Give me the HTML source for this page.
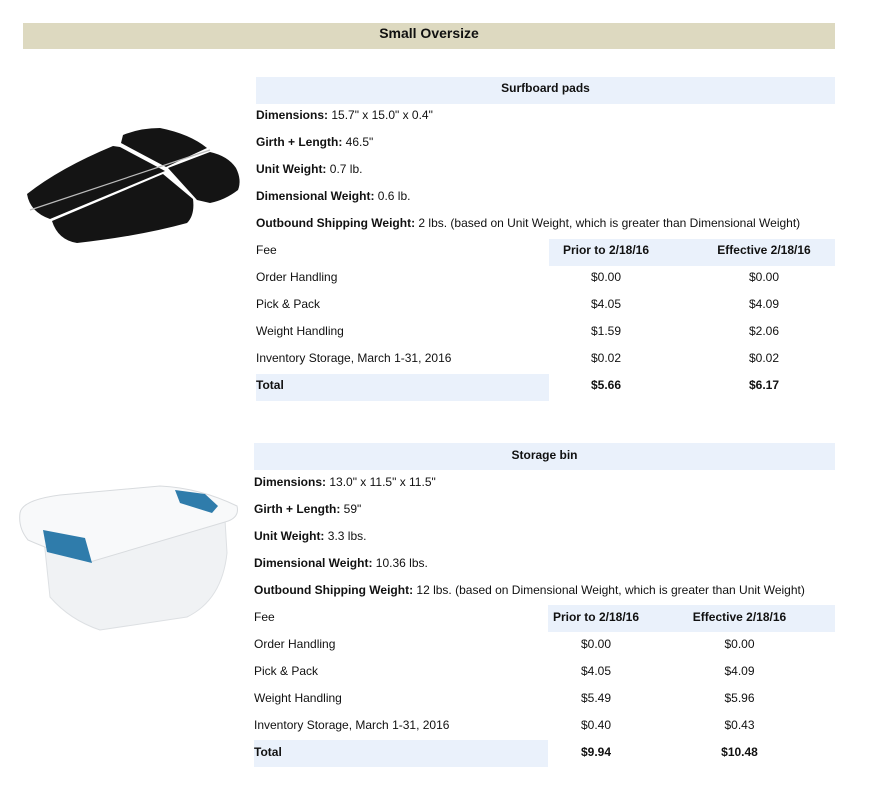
<!DOCTYPE html>
<html><head><style>
body{margin:0;background:#fff;font-family:"Liberation Sans",Arial,sans-serif;font-size:12px;color:#111;width:870px;height:787px;position:relative;overflow:hidden}
.hdr{position:absolute;left:23px;top:23px;width:812px;height:26px;background:#ddd9c0;text-align:center;font-weight:bold;font-size:14px;line-height:21px}
table{position:absolute;border-collapse:collapse}
td{height:22px;padding:0 0 5px 0;vertical-align:middle;line-height:20px}
.t2 td{height:23px;padding:0 0 4px 0}
.b{background:#eaf1fb}
.c{text-align:center}
</style></head><body>
<div class="hdr">Small Oversize</div>

<svg style="position:absolute;left:0;top:0" width="870" height="787">
<g fill="#141414">
<path d="M27 194 Q60 168 113 146 L120 147 L165 171 L50 219 Q30 212 27 194Z"/>
<path d="M121 143 L123 135 Q140 128 160 128 Q190 134 207 148 L166 167Z"/>
<path d="M52 221 L163 174 L193 199 Q195 215 187 223 Q140 236 77 243 Q58 240 52 221Z"/>
<path d="M168 168 L210 152 Q228 156 236 168 Q242 180 238 190 Q225 200 210 203 L197 200Z"/>
</g>
<path d="M30 210 L210 150" stroke="#bbb" stroke-width="1.2"/>

<path d="M44 540 L50 597 Q70 620 100 630 L187 617 Q222 600 227 553 L225 520 Z" fill="#f0f2f4" stroke="#dde0e3"/>
<path d="M20 513 Q22 500 60 495 L160 486 Q200 488 237 506 Q240 518 225 522 L90 562 Q55 552 28 540 Q18 528 20 513Z" fill="#f8f9fa" stroke="#d8dbde"/>
<path d="M43 530 L85 538 L92 563 L47 552 Z" fill="#2f7cab"/>
<path d="M175 490 L205 494 L218 506 L212 513 L180 503Z" fill="#2f7cab"/>
</svg>

<table style="left:256px;top:77px;width:579px">
<tr><td colspan="3" class="b c" style="font-weight:bold">Surfboard pads</td></tr>
<tr><td colspan="3"><b>Dimensions:</b> 15.7" x 15.0" x 0.4"</td></tr>
<tr><td colspan="3"><b>Girth + Length:</b> 46.5"</td></tr>
<tr><td colspan="3"><b>Unit Weight:</b> 0.7 lb.</td></tr>
<tr><td colspan="3"><b>Dimensional Weight:</b> 0.6 lb.</td></tr>
<tr><td colspan="3"><b>Outbound Shipping Weight:</b> 2 lbs. (based on Unit Weight, which is greater than Dimensional Weight)</td></tr>
<tr><td style="width:293px">Fee</td><td class="b c" style="width:114px;font-weight:bold">Prior to 2/18/16</td><td class="b c" style="font-weight:bold;padding-left:30px">Effective 2/18/16</td></tr>
<tr><td>Order Handling</td><td class="c">$0.00</td><td class="c" style="padding-left:30px">$0.00</td></tr>
<tr><td>Pick &amp; Pack</td><td class="c">$4.05</td><td class="c" style="padding-left:30px">$4.09</td></tr>
<tr><td>Weight Handling</td><td class="c">$1.59</td><td class="c" style="padding-left:30px">$2.06</td></tr>
<tr><td>Inventory Storage, March 1-31, 2016</td><td class="c">$0.02</td><td class="c" style="padding-left:30px">$0.02</td></tr>
<tr><td class="b"><b>Total</b></td><td class="c"><b>$5.66</b></td><td class="c" style="padding-left:30px"><b>$6.17</b></td></tr>
</table>

<table class="t2" style="left:254px;top:443px;width:581px">
<tr><td colspan="3" class="b c" style="font-weight:bold">Storage bin</td></tr>
<tr><td colspan="3"><b>Dimensions:</b> 13.0" x 11.5" x 11.5"</td></tr>
<tr><td colspan="3"><b>Girth + Length:</b> 59"</td></tr>
<tr><td colspan="3"><b>Unit Weight:</b> 3.3 lbs.</td></tr>
<tr><td colspan="3"><b>Dimensional Weight:</b> 10.36 lbs.</td></tr>
<tr><td colspan="3"><b>Outbound Shipping Weight:</b> 12 lbs. (based on Dimensional Weight, which is greater than Unit Weight)</td></tr>
<tr><td style="width:294px">Fee</td><td class="b c" style="width:96px;font-weight:bold">Prior to 2/18/16</td><td class="b c" style="font-weight:bold">Effective 2/18/16</td></tr>
<tr><td>Order Handling</td><td class="c">$0.00</td><td class="c">$0.00</td></tr>
<tr><td>Pick &amp; Pack</td><td class="c">$4.05</td><td class="c">$4.09</td></tr>
<tr><td>Weight Handling</td><td class="c">$5.49</td><td class="c">$5.96</td></tr>
<tr><td>Inventory Storage, March 1-31, 2016</td><td class="c">$0.40</td><td class="c">$0.43</td></tr>
<tr><td class="b"><b>Total</b></td><td class="c"><b>$9.94</b></td><td class="c"><b>$10.48</b></td></tr>
</table>
</body></html>
